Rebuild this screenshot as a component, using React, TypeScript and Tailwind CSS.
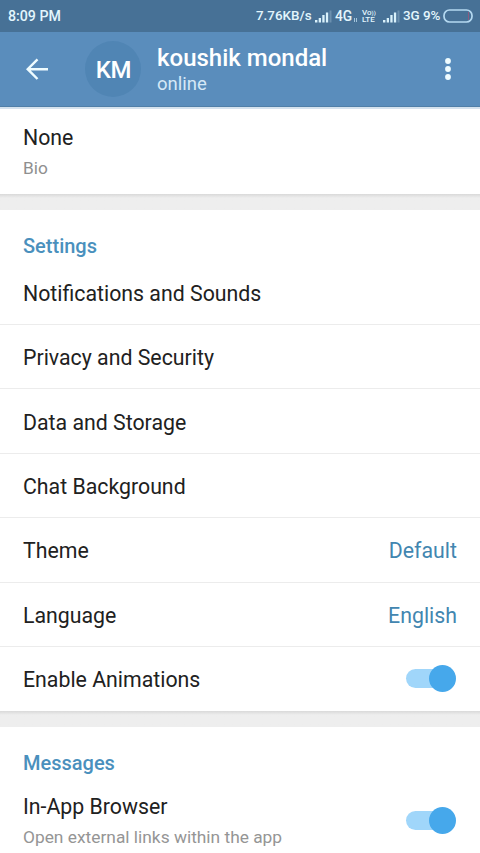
import React from 'react';

const rows = [
  { label: 'Privacy and Security' },
  { label: 'Data and Storage' },
  { label: 'Chat Background' },
  { label: 'Theme', value: 'Default' },
  { label: 'Language', value: 'English' },
]

function Signal() {
  return (
    <svg width="17" height="13" viewBox="0 0 17 13" fill="#d9f1fb">
      <rect x="0" y="10" width="2.4" height="2.5"/>
      <rect x="3.7" y="8" width="2.3" height="4.5"/>
      <rect x="7.3" y="5" width="2.3" height="7.5"/>
      <rect x="10.9" y="2.5" width="2.3" height="10"/>
      <rect x="14.5" y="0.5" width="2" height="12" opacity="0.25"/>
    </svg>
  )
}

function Toggle() {
  return (
    <div className="mr-px flex h-[27px] w-[50px] items-center rounded-full">
      <div className="h-[19px] w-[34px] shrink-0 rounded-l-full bg-[#a0d6fa]"></div>
      <div className="-ml-[11px] size-[27px] shrink-0 rounded-full bg-[#46a8eb]"></div>
    </div>
  )
}

function Divider() {
  return <div className="h-4 bg-[#eeeeee] bg-linear-to-b from-[#d9d9d9] to-[#eeeeee] to-25%"></div>
}

function StatusBar() {
  return (
    <div className="flex h-8 items-center bg-[#477196] pl-2 pr-[7px] text-[13.4px] font-medium text-[#e3f6fd]">
      <div className="flex-1 pt-px text-[14.2px]">8:09 PM</div>
      <div className="w-[59px] whitespace-nowrap pt-px">7.76KB/s</div>
      <Signal/>
      <div className="ml-[3px] w-4 pt-px text-[13.8px]">4G</div>
      <svg className="mt-[7px] ml-[2px]" width="5" height="6" viewBox="0 0 5 6" fill="none" stroke="#a3c5dc" strokeWidth="1">
        <path d="M1.5 1v4M3.5 1v4"/>
      </svg>
      <div className="ml-[4px] w-[15px] text-[8px] leading-[7.5px]">
        <div className="whitespace-nowrap">Vo<span className="text-[6px]">))</span></div>
        <div>LTE</div>
      </div>
      <div className="ml-[6px] flex"><Signal/></div>
      <div className="ml-[3px] w-[20px] whitespace-nowrap pt-px">3G</div>
      <div className="w-[20px] whitespace-nowrap pt-px">9%</div>
      <svg width="30" height="14" viewBox="0 0 30 14" fill="none">
        <path d="M25 3h1v8h-1z" fill="#8a5b80"/>
        <rect x="1" y="1" width="28" height="12" rx="5.5" stroke="#b5d9f1" strokeWidth="1.7"/>
      </svg>
    </div>
  )
}

function Header() {
  return (
    <div className="flex h-[75px] items-center border-b border-[#507fa8] bg-[#5a8dbc] text-white">
      <svg className="ml-[26px]" width="22" height="22" viewBox="0 0 22 22" fill="none" stroke="#effcff" strokeWidth="2.4">
        <path d="M22 11.2H2M11.5 1.4L1.7 11.2l9.8 9.8"/>
      </svg>
      <div className="ml-[37px] flex size-14 items-center justify-center rounded-full bg-[#5085b4] pt-px pl-px text-[24px] font-medium tracking-[-0.3px]">KM</div>
      <div className="ml-4 flex-1 pt-[3px]">
        <div className="text-[24px] font-medium leading-7">koushik mondal</div>
        <div className="text-[18.5px] leading-[25px] text-[#d5e8f7]">online</div>
      </div>
      <svg className="mr-[28px]" width="8" height="22" viewBox="0 0 8 22" fill="#effcff">
        <circle cx="4" cy="3" r="2.9"/>
        <circle cx="4" cy="11" r="2.9"/>
        <circle cx="4" cy="19" r="2.9"/>
      </svg>
    </div>
  )
}

export default function App() {
  return (
    <div className="flex h-[853px] w-[480px] flex-col overflow-hidden bg-white font-['Roboto',sans-serif] text-[21.3px] text-[#212121]">
      <StatusBar/>
      <Header/>

      <div className="h-[87px] border-t-2 border-[#d5e2ee] px-[23px] pt-[15px]">
        <div className="leading-7">None</div>
        <div className="mt-[4px] text-[17.3px] leading-6 text-[#8f8f8f]">Bio</div>
      </div>
      <Divider/>

      <div>
        <div className="px-[23px] pt-[22px] text-[20px] font-medium leading-7 text-[#4a90bd]">Settings</div>
        <div className="flex h-[65px] items-center border-b border-[#ececec] px-[23px] pt-[3px]">Notifications and Sounds</div>
        {rows.map((row) => (
          <div key={row.label} className="flex h-[64.4px] items-center justify-between border-b border-[#ececec] px-[23px] pt-[3px]">
            <div>{row.label}</div>
            <div className="text-[#4286b0]">{row.value}</div>
          </div>
        ))}
        <div className="flex h-[64px] items-center justify-between px-[23px]">
          <div className="pt-[2px]">Enable Animations</div>
          <Toggle/>
        </div>
      </div>
      <Divider/>

      <div className="px-[23px] pt-[22px]">
        <div className="text-[20px] font-medium leading-7 text-[#4a90bd]">Messages</div>
        <div className="mt-[15px] flex items-center justify-between">
          <div>
            <div className="pt-px leading-7">In-App Browser</div>
            <div className="mt-[4px] text-[17.35px] leading-6 text-[#959595]">Open external links within the app</div>
          </div>
          <Toggle/>
        </div>
      </div>
    </div>
  )
}
